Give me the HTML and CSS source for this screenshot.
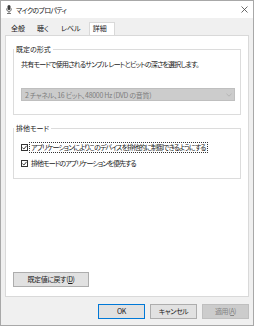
FILE: index.html
```html
<!DOCTYPE html>
<html lang="ja">
<head>
<meta charset="UTF-8">
<meta name="viewport" content="width=device-width, initial-scale=1.0">
<title>マイクのプロパティ</title>
<link rel="stylesheet" href="styles.css">
</head>
<body>
<div class="window">
  <div class="titlebar">
    <svg class="app-icon" width="6" height="9" viewBox="0 0 6 9">
      <rect x="1.5" y="0" width="3" height="5" rx="1.5" fill="#3c3c3c"/>
      <path d="M0.5 3.5 Q0.5 6.5 3 6.5 Q5.5 6.5 5.5 3.5" fill="none" stroke="#555" stroke-width="0.8"/>
      <rect x="2.6" y="6.5" width="0.8" height="1.8" fill="#555"/>
      <rect x="1" y="8.2" width="4" height="0.8" fill="#555"/>
    </svg>
    <span class="title">マイクのプロパティ</span>
    <svg class="close" width="7" height="7" viewBox="0 0 7 7">
      <path d="M0.5 0.5 L6.5 6.5 M6.5 0.5 L0.5 6.5" stroke="#444" stroke-width="0.8"/>
    </svg>
  </div>

  <div class="dialog">
    <div class="tabs">
      <span class="tab">全般</span>
      <span class="tab">聴く</span>
      <span class="tab">レベル</span>
      <span class="tab active">詳細</span>
    </div>

    <div class="panel">
      <fieldset class="group">
        <legend>既定の形式</legend>
        <div class="group-body format">
          <p class="hint">共有モードで使用されるサンプル レートとビットの深さを選択します。</p>
          <div class="select">
            <span>2 チャネル、16 ビット、48000 Hz (DVD の音質)</span>
            <svg width="6" height="4" viewBox="0 0 6 4">
              <path d="M0.5 0.8 L3 3.2 L5.5 0.8" fill="none" stroke="#aaa" stroke-width="0.7"/>
            </svg>
          </div>
        </div>
      </fieldset>

      <fieldset class="group">
        <legend>排他モード</legend>
        <div class="group-body exclusive">
          <label class="check">
            <span class="box">
              <svg width="5" height="5" viewBox="0 0 5 5"><path d="M0.4 2.6 L1.9 4 L4.6 0.8" fill="none" stroke="#222" stroke-width="0.9"/></svg>
            </span>
            <span class="text focused">アプリケーションによりこのデバイスを排他的に制御できるようにする</span>
          </label>
          <label class="check">
            <span class="box">
              <svg width="5" height="5" viewBox="0 0 5 5"><path d="M0.4 2.6 L1.9 4 L4.6 0.8" fill="none" stroke="#222" stroke-width="0.9"/></svg>
            </span>
            <span class="text">排他モードのアプリケーションを優先する</span>
          </label>
        </div>
      </fieldset>

      <button class="btn reset">既定値に戻す(<u>D</u>)</button>
    </div>

    <div class="actions">
      <button class="btn default">OK</button>
      <button class="btn">キャンセル</button>
      <button class="btn" disabled>適用(<u>A</u>)</button>
    </div>
  </div>
</div>
</body>
</html>
```

FILE: styles.css
```css
* {
  box-sizing: border-box;
}
body {
  margin: 0;
  font-family: "Noto Sans CJK JP", "Noto Sans", sans-serif;
  font-size: 7px;
  font-feature-settings: "palt";
  color: #1a1a1a;
}
.window {
  width: 254px;
  height: 326px;
  border: 1px solid #a8a8a8;
  background-color: #f0f0f0;
  display: flex;
  flex-direction: column;
}
.titlebar {
  height: 17px;
  background-color: #fff;
  display: flex;
  align-items: center;
  padding: 0 5px 0 5px;
}
.app-icon {
  margin-right: 4px;
}
.title {
  flex: 1;
  color: #222;
  letter-spacing: -0.7px;
}
/* Tabs */
.dialog {
  flex: 1;
  padding: 5px 4px 0 4px;
  display: flex;
  flex-direction: column;
}
.tabs {
  display: flex;
  height: 12px;
  align-items: stretch;
}
.tab {
  padding: 0 6px;
  line-height: 11px;
}
.tab.active {
  background-color: #fff;
  border: 1px solid #d9d9d9;
  border-bottom: none;
  margin-left: 2px;
  padding: 0 7px 0 3px;
  position: relative;
  z-index: 1;
  height: 13px;
  margin-top: -1px;
}
.panel {
  height: 262px;
  background-color: #fff;
  border: 1px solid #d9d9d9;
  padding: 8px 7px 9px 7px;
  display: flex;
  flex-direction: column;
}
/* Group boxes */
.group {
  border: 1px solid #dcdcdc;
  margin: 0 0 8px 0;
  padding: 0;
  width: 228px;
}
.group legend {
  padding: 0 2px;
  margin-left: 0;
  line-height: 10px;
}
.group-body {
  padding: 0 5px 0 7px;
}
.format {
  padding-top: 5px;
  padding-bottom: 13px;
}
.hint {
  margin: 0 0 19px 0;
  line-height: 10px;
  letter-spacing: -0.8px;
  white-space: nowrap;
}
.select {
  height: 13px;
  background-color: #cccccc;
  border: 1px solid #bfbfbf;
  color: #7d7d7d;
  display: flex;
  align-items: center;
  justify-content: space-between;
  padding: 0 2px 0 3px;
  letter-spacing: -0.3px;
}
.exclusive {
  padding-top: 9px;
  padding-bottom: 9px;
  display: flex;
  flex-direction: column;
  gap: 5px;
}
.check {
  display: flex;
  align-items: center;
  height: 11px;
}
.box {
  width: 7px;
  height: 7px;
  border: 1px solid #333;
  background-color: #fff;
  display: flex;
  align-items: center;
  justify-content: center;
  margin-right: 2px;
}
.check .text {
  line-height: 9px;
  padding: 0 1px;
  letter-spacing: -0.95px;
  white-space: nowrap;
}
.text.focused {
  outline: 1px dotted #333;
}
/* Buttons */
.btn {
  font: inherit;
  color: #1a1a1a;
  background-color: #e1e1e1;
  border: 1px solid #adadad;
  height: 15px;
  padding: 0;
  line-height: 13px;
  letter-spacing: -0.4px;
}
.btn u {
  text-decoration: underline;
}
.reset {
  margin-top: auto;
  width: 76px;
}
.actions {
  display: flex;
  justify-content: flex-end;
  gap: 5px;
  padding-top: 7px;
}
.actions .btn {
  width: 47px;
}
.btn.default {
  border-color: #0078d7;
}
.btn:disabled {
  background-color: #cccccc;
  border-color: #bfbfbf;
  color: #838383;
}
```
